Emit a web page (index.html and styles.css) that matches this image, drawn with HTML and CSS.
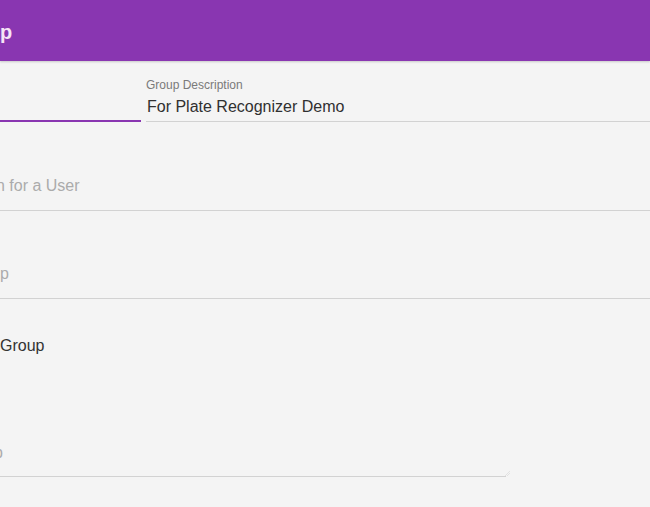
FILE: index.html
```html
<!DOCTYPE html>
<html lang="en">
<head>
  <meta charset="UTF-8">
  <meta name="viewport" content="width=device-width, initial-scale=1.0">
  <title>Edit Group</title>
  <link rel="stylesheet" href="styles.css">
</head>
<body>
  <header class="topbar">
    <h1 class="topbar-title">p</h1>
  </header>

  <main class="form">
    <div class="form-row">
      <div class="field field-name field-active">
        <div class="field-value"></div>
      </div>
      <div class="field field-desc">
        <label class="field-label">Group Description</label>
        <div class="field-value">For Plate Recognizer Demo</div>
      </div>
    </div>

    <div class="field field-search field-user">
      <div class="field-placeholder shift-user">n for a User</div>
    </div>

    <div class="field field-search field-group">
      <div class="field-placeholder shift-group">up</div>
    </div>

    <h2 class="section-title">Group</h2>

    <div class="field field-notes">
      <div class="field-placeholder shift-notes">p</div>
      <span class="grip"></span>
    </div>
  </main>
</body>
</html>
```

FILE: styles.css
```css
body { margin: 0; background: #f4f4f4; font-family: "Liberation Sans", Arial, sans-serif; overflow: hidden; }

.topbar { height: 61px; background: #8936b1; box-shadow: 0 1px 2px rgba(0,0,0,.18); display: flex; align-items: center; }
.topbar-title { margin: 0; font-size: 20px; font-weight: 700; line-height: 24px; color: #f6e4f6; padding-top: 2px; }

.form { display: flex; flex-direction: column; }

.form-row { display: grid; grid-template-columns: 141px 1fr; column-gap: 5px; align-items: end; height: 61px; }

.field { border-bottom: 1px solid #d2d2d2; }
.field-active { border-bottom: 2px solid #8936b1; }
.field-desc { padding-bottom: 4px; }
.field-label { display: block; font-size: 12px; line-height: 14px; color: #7a7a7a; }
.field-value { margin-top: 5px; font-size: 16px; line-height: 20px; color: #303030; padding-left: 1px; }
.field-name .field-value { margin-top: 0; padding-bottom: 4px; }

.field-placeholder { font-size: 16px; line-height: 20px; color: #ababab; white-space: nowrap; }
.field-search { padding-bottom: 14px; }
.field-user { padding-top: 54px; }
.field-group { padding-top: 53px; }

.shift-user { margin-left: -4px; }
.shift-group { margin-left: -9px; }
.shift-notes { margin-left: -6px; }

.section-title { margin: 37px 0 0; font-size: 16px; font-weight: 400; line-height: 20px; color: #333; }

.field-notes { position: relative; width: 506px; margin-top: 87px; padding-bottom: 13px; }
.grip { position: absolute; right: -4px; bottom: 0; width: 5px; height: 5px;
  background: linear-gradient(135deg, transparent 45%, #e2e2e2 45%, #e2e2e2 55%, transparent 55%, transparent 70%, #e2e2e2 70%, #e2e2e2 80%, transparent 80%); }
```
